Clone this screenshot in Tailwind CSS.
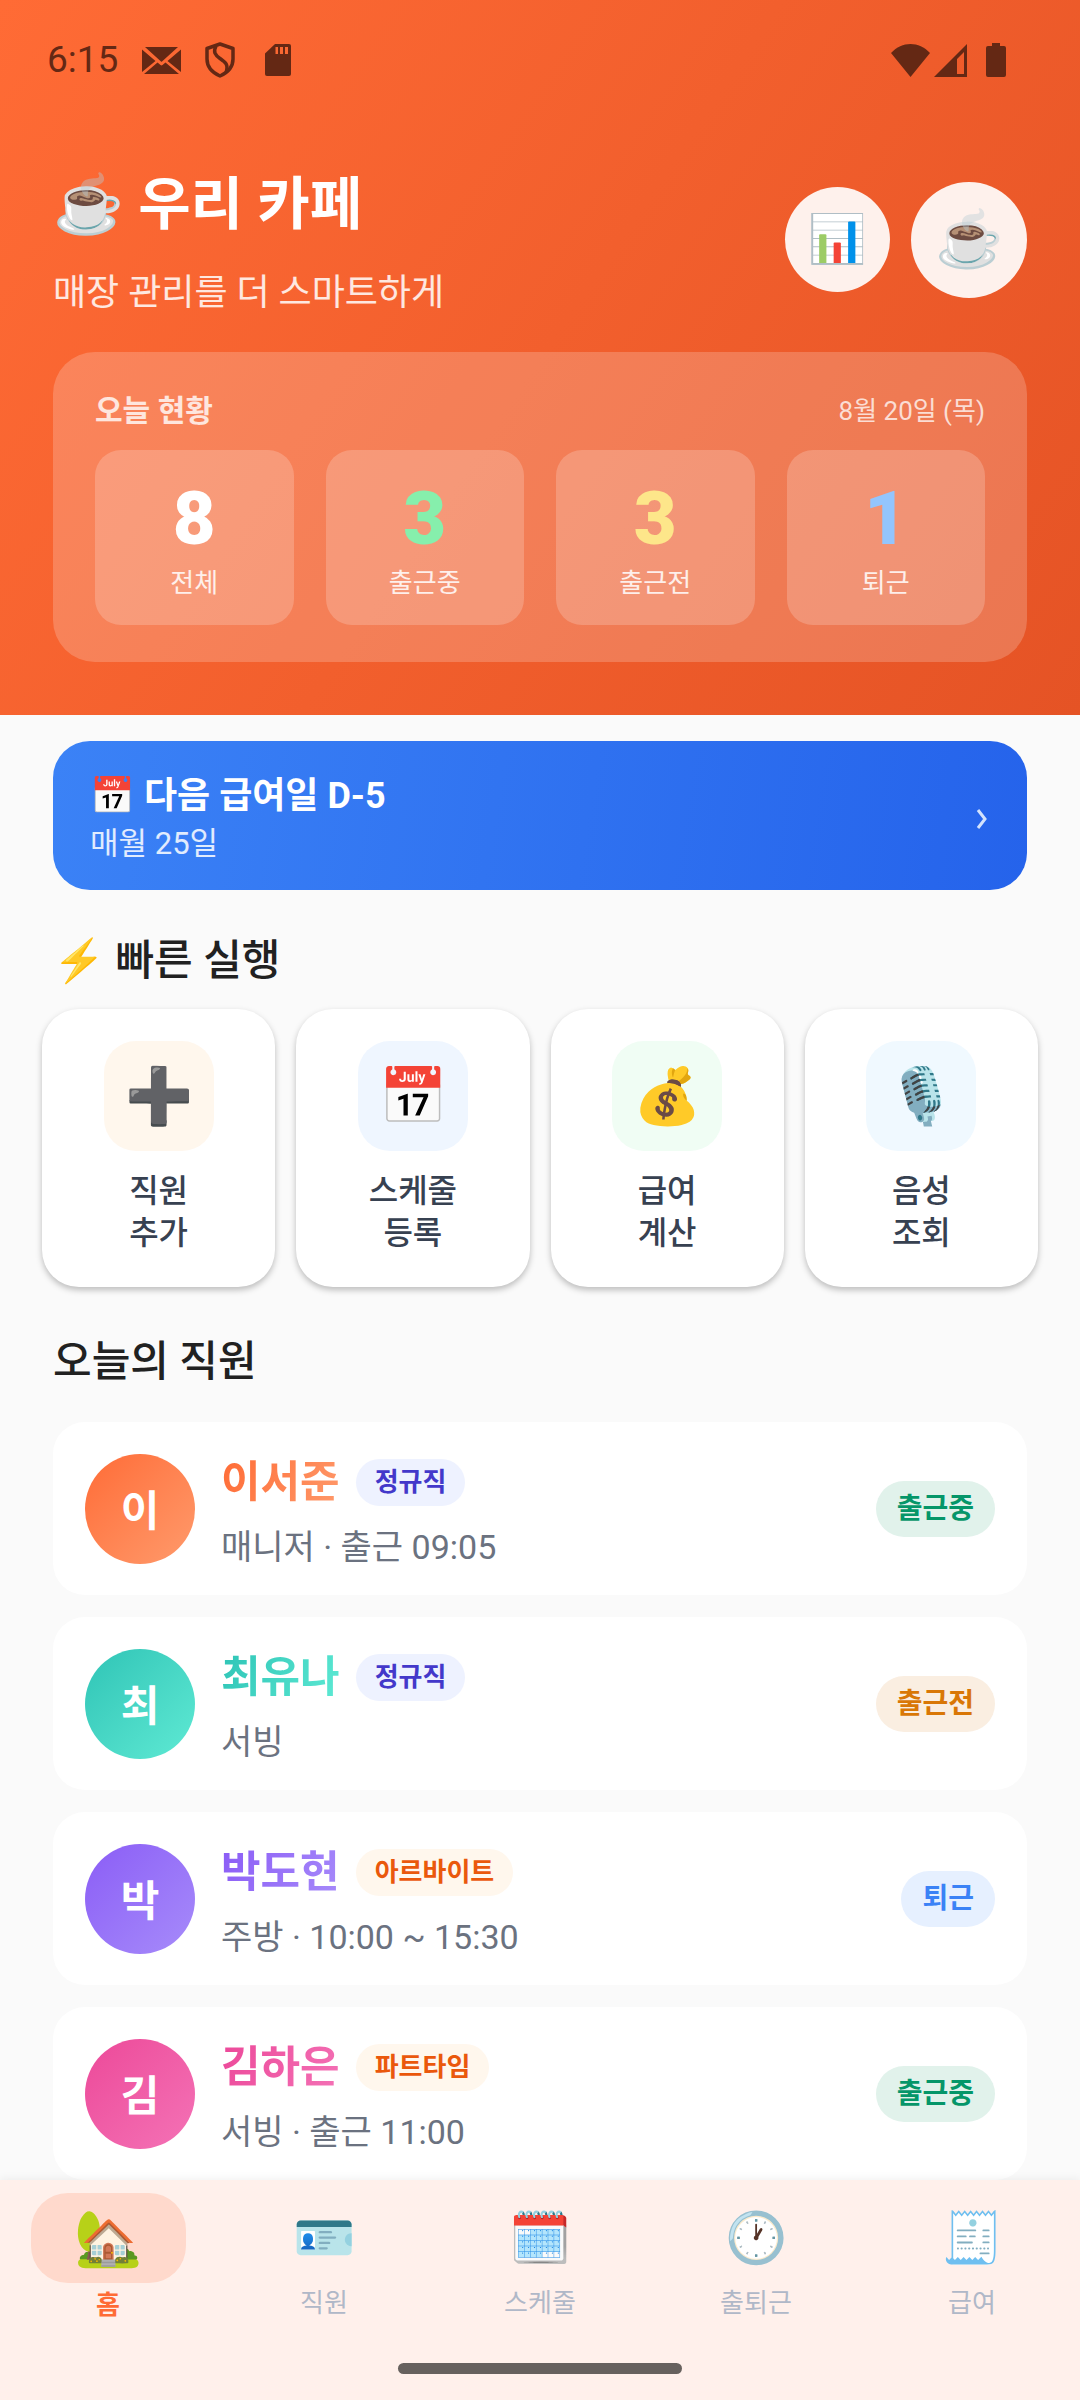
<!DOCTYPE html>
<html lang="ko">
<head>
  <meta charset="UTF-8">
  <meta name="viewport" content="width=device-width, initial-scale=1">
  <title>우리 카페</title>
  <script src="https://cdn.jsdelivr.net/npm/@tailwindcss/browser@4"></script>
</head>
<body class="min-h-screen flex flex-col bg-[#fafafa] text-[#212121] font-['Roboto','Noto_Sans_CJK_KR',sans-serif]">

  <!-- ───── Header ───── -->
  <header class="bg-linear-[124deg] from-[#ff6b35] to-[#e55325] pb-[53px]">

    <!-- status bar -->
    <div class="h-[120px] pl-[47px] pr-[74px] flex items-center justify-between text-[#642814]">
      <div class="flex items-center">
        <span class="text-[37px] leading-[42px]">6:15</span>
        <svg class="w-[39px] h-[27px] ml-6" viewBox="0 0 39 27" fill="currentColor">
          <path d="M3 0h33l-16 14.500q-.5.500-1 0zM0 2.500l13.500 11.500L0 25zM39 2.500V25L25.500 14zM15.500 15.500l3 2.500q1 .8 2 0l3-2.500L37 27H2z"/>
        </svg>
        <svg class="w-[30px] h-[36px] ml-6" viewBox="0 0 30 36" fill="none" stroke="currentColor" stroke-width="3.500" stroke-linejoin="round">
          <path d="M15 2 28 6.500V17c0 8-5 13.500-13 17C7 30.500 2 25 2 17V6.500z"/>
          <path d="M11 4c-3 6-1 9 4 12.500s9 6 6 14"/>
        </svg>
        <svg class="w-[26px] h-[32px] ml-[30px]" viewBox="0 0 26 32">
          <path d="M10 0h14a2 2 0 0 1 2 2v28a2 2 0 0 1-2 2H2a2 2 0 0 1-2-2V9.500z" fill="currentColor"/>
          <path d="M10.500 3h2.500v7h-2.500zM15 3h3v7h-3zM20 3h3v7h-3z" fill="#fa6832"/>
        </svg>
      </div>
      <div class="flex items-center">
        <svg class="w-[39px] h-[33px]" viewBox="0 0 39 33" fill="currentColor">
          <path d="M0 9C11-3 28-3 39 9L19.500 33z"/>
        </svg>
        <svg class="w-[33px] h-[33px] ml-1" viewBox="0 0 33 33" fill="currentColor">
          <path fill-rule="evenodd" d="M33 0v33H0zM30 8l-7 7v15h7z"/>
        </svg>
        <svg class="w-[20px] h-[34px] ml-[19px]" viewBox="0 0 20 34" fill="currentColor">
          <path d="M6 0h8v3h4a2 2 0 0 1 2 2v27a2 2 0 0 1-2 2H2a2 2 0 0 1-2-2V5a2 2 0 0 1 2-2h4z"/>
        </svg>
      </div>
    </div>

    <div class="px-[53px] pt-[41px]">
      <div class="flex items-center justify-between text-white">
        <div>
          <h1 class="text-[57px] leading-[88px] font-bold">☕ 우리 카페</h1>
          <p class="mt-[19px] text-[36px] leading-[50px] text-white/85">매장 관리를 더 스마트하게</p>
        </div>
        <div class="flex items-center gap-[21px]">
          <button type="button" aria-label="통계" class="size-[105px] rounded-full bg-[#fef1ec] flex items-center justify-center text-[47px]">📊</button>
          <button type="button" aria-label="매장" class="size-[116px] rounded-full bg-[#fef1ec] flex items-center justify-center text-[55px]">☕</button>
        </div>
      </div>

      <!-- today's numbers -->
      <section class="mt-[34px] rounded-[42px] bg-white/20 px-[42px] pt-[38px] pb-[37px]">
        <div class="flex items-center justify-between">
          <h2 class="text-[30px] leading-[42px] font-bold text-white/80">오늘 현황</h2>
          <span class="text-[26px] leading-[42px] text-white/75">8월 20일 (목)</span>
        </div>
        <div class="mt-[18px] grid grid-cols-4 gap-8 text-center">
          <div class="rounded-[26px] bg-white/20 pt-8 pb-[22px]">
            <div class="text-[74px] leading-[74px] font-black text-white">8</div>
            <div class="mt-2 text-[26px] leading-[39px] text-white/85">전체</div>
          </div>
          <div class="rounded-[26px] bg-white/20 pt-8 pb-[22px]">
            <div class="text-[74px] leading-[74px] font-black text-[#86efac]">3</div>
            <div class="mt-2 text-[26px] leading-[39px] text-white/85">출근중</div>
          </div>
          <div class="rounded-[26px] bg-white/20 pt-8 pb-[22px]">
            <div class="text-[74px] leading-[74px] font-black text-[#fde68a]">3</div>
            <div class="mt-2 text-[26px] leading-[39px] text-white/85">출근전</div>
          </div>
          <div class="rounded-[26px] bg-white/20 pt-8 pb-[22px]">
            <div class="text-[74px] leading-[74px] font-black text-[#93c5fd]">1</div>
            <div class="mt-2 text-[26px] leading-[39px] text-white/85">퇴근</div>
          </div>
        </div>
      </section>
    </div>
  </header>

  <main class="flex-1 px-[53px] pt-[26px]">

    <!-- ───── Next payday ───── -->
    <a href="#payday" class="flex items-center justify-between rounded-[37px] bg-linear-[99deg] from-[#3b82f6] to-[#2563eb] pl-[37px] pr-[39px] pt-[30px] pb-6 text-white">
      <div>
        <div class="text-[36px] leading-[50px] font-bold">📅 다음 급여일 D-5</div>
        <div class="text-[31px] leading-[45px] text-white/85">매월 25일</div>
      </div>
      <svg class="w-[12px] h-[22px]" viewBox="0 0 12 22" fill="none" stroke="#d3e2fc" stroke-width="3">
        <path d="M2 2l7 9-7 9"/>
      </svg>
    </a>

    <!-- ───── Quick actions ───── -->
    <h2 class="mt-[41px] text-[42px] leading-[60px] font-medium">⚡ 빠른 실행</h2>
    <div class="mt-[18px] -mx-[11px] grid grid-cols-4 gap-[21px] text-[32px] leading-[42px] font-medium text-[#374151]">
      <button type="button" class="flex flex-col items-center rounded-[37px] bg-white pt-8 pb-[33px] shadow-[0_3px_6px_rgba(0,0,0,0.25)]">
        <span class="size-[110px] rounded-[32px] bg-[#fff7ed] flex items-center justify-center text-[55px]">➕</span>
        <span class="mt-[19px]">직원<br>추가</span>
      </button>
      <button type="button" class="flex flex-col items-center rounded-[37px] bg-white pt-8 pb-[33px] shadow-[0_3px_6px_rgba(0,0,0,0.25)]">
        <span class="size-[110px] rounded-[32px] bg-[#eff6ff] flex items-center justify-center text-[55px]">📅</span>
        <span class="mt-[19px]">스케줄<br>등록</span>
      </button>
      <button type="button" class="flex flex-col items-center rounded-[37px] bg-white pt-8 pb-[33px] shadow-[0_3px_6px_rgba(0,0,0,0.25)]">
        <span class="size-[110px] rounded-[32px] bg-[#f0fdf4] flex items-center justify-center text-[55px]">💰</span>
        <span class="mt-[19px]">급여<br>계산</span>
      </button>
      <button type="button" class="flex flex-col items-center rounded-[37px] bg-white pt-8 pb-[33px] shadow-[0_3px_6px_rgba(0,0,0,0.25)]">
        <span class="size-[110px] rounded-[32px] bg-[#f0f9ff] flex items-center justify-center text-[55px]">🎙️</span>
        <span class="mt-[19px]">음성<br>조회</span>
      </button>
    </div>

    <!-- ───── Today's staff ───── -->
    <h2 class="mt-[45px] text-[42px] leading-[60px] font-medium">오늘의 직원</h2>
    <ul class="mt-[30px] space-y-[22px]">
      <li class="flex items-center rounded-[32px] bg-white px-8 pt-8 pb-[31px]">
        <span class="size-[110px] rounded-full bg-linear-135 from-[#ff6b35] to-[#ff9a6b] flex items-center justify-center pt-1 text-[42px] font-bold text-white">이</span>
        <div class="ml-[26px] flex-1">
          <div class="flex items-center gap-4">
            <span class="text-[43px] leading-[56px] font-bold bg-linear-[117deg] from-[#ff6b35] to-[#ff9a6b] bg-clip-text text-transparent">이서준</span>
            <span class="rounded-full bg-[#eef2ff] px-[19px] text-[26px] leading-[47px] font-bold text-[#4338ca]">정규직</span>
          </div>
          <p class="mt-5 text-[34px] leading-[34px] text-[#6b7280]">매니저 · 출근 09:05</p>
        </div>
        <span class="rounded-full bg-[#e1f2eb] px-[21px] text-[28px] leading-[56px] font-bold text-[#059669]">출근중</span>
      </li>
      <li class="flex items-center rounded-[32px] bg-white px-8 pt-8 pb-[31px]">
        <span class="size-[110px] rounded-full bg-linear-135 from-[#2ec4b6] to-[#5eead4] flex items-center justify-center pt-1 text-[42px] font-bold text-white">최</span>
        <div class="ml-[26px] flex-1">
          <div class="flex items-center gap-4">
            <span class="text-[43px] leading-[56px] font-bold bg-linear-[117deg] from-[#2ec4b6] to-[#5eead4] bg-clip-text text-transparent">최유나</span>
            <span class="rounded-full bg-[#eef2ff] px-[19px] text-[26px] leading-[47px] font-bold text-[#4338ca]">정규직</span>
          </div>
          <p class="mt-5 text-[34px] leading-[34px] text-[#6b7280]">서빙</p>
        </div>
        <span class="rounded-full bg-[#faeee1] px-[21px] text-[28px] leading-[56px] font-bold text-[#d97706]">출근전</span>
      </li>
      <li class="flex items-center rounded-[32px] bg-white px-8 pt-8 pb-[31px]">
        <span class="size-[110px] rounded-full bg-linear-135 from-[#8b5cf6] to-[#a78bfa] flex items-center justify-center pt-1 text-[42px] font-bold text-white">박</span>
        <div class="ml-[26px] flex-1">
          <div class="flex items-center gap-4">
            <span class="text-[43px] leading-[56px] font-bold bg-linear-[117deg] from-[#8b5cf6] to-[#a78bfa] bg-clip-text text-transparent">박도현</span>
            <span class="rounded-full bg-[#fff7ed] px-[19px] text-[26px] leading-[47px] font-bold text-[#ea580c]">아르바이트</span>
          </div>
          <p class="mt-5 text-[34px] leading-[34px] text-[#6b7280]">주방 · 10:00 ~ 15:30</p>
        </div>
        <span class="rounded-full bg-[#e6f0ff] px-[21px] text-[28px] leading-[56px] font-bold text-[#3b82f6]">퇴근</span>
      </li>
      <li class="flex items-center rounded-[32px] bg-white px-8 pt-8 pb-[31px]">
        <span class="size-[110px] rounded-full bg-linear-135 from-[#ec4899] to-[#f472b6] flex items-center justify-center pt-1 text-[42px] font-bold text-white">김</span>
        <div class="ml-[26px] flex-1">
          <div class="flex items-center gap-4">
            <span class="text-[43px] leading-[56px] font-bold bg-linear-[117deg] from-[#ec4899] to-[#f472b6] bg-clip-text text-transparent">김하은</span>
            <span class="rounded-full bg-[#fff7ed] px-[19px] text-[26px] leading-[47px] font-bold text-[#ea580c]">파트타임</span>
          </div>
          <p class="mt-5 text-[34px] leading-[34px] text-[#6b7280]">서빙 · 출근 11:00</p>
        </div>
        <span class="rounded-full bg-[#e1f2eb] px-[21px] text-[28px] leading-[56px] font-bold text-[#059669]">출근중</span>
      </li>
    </ul>
  </main>

  <!-- ───── Bottom navigation ───── -->
  <nav class="sticky bottom-0 bg-[#fff0eb] pt-[13px] pb-[26px] shadow-[0_-2px_8px_rgba(0,0,0,0.05)]">
    <div class="grid grid-cols-5 text-center text-[26px] leading-[40px] text-[#b0b8c8]">
      <a href="#home" class="flex flex-col items-center gap-0.5 font-bold text-[#ff6b35]">
        <span class="w-[155px] h-[90px] rounded-[37px] bg-[#ffd9cc] flex items-center justify-center text-[55px]">🏡</span>
        홈
      </a>
      <a href="#staff" class="flex flex-col items-center">
        <span class="h-[90px] flex items-center text-[50px]">🪪</span>
        직원
      </a>
      <a href="#schedule" class="flex flex-col items-center">
        <span class="h-[90px] flex items-center text-[50px]">🗓️</span>
        스케줄
      </a>
      <a href="#attendance" class="flex flex-col items-center">
        <span class="h-[90px] flex items-center text-[50px]">🕐</span>
        출퇴근
      </a>
      <a href="#pay" class="flex flex-col items-center">
        <span class="h-[90px] flex items-center text-[50px]">🧾</span>
        급여
      </a>
    </div>
    <div class="mt-[38px] mx-auto w-[284px] h-[11px] rounded-full bg-[#67615e]"></div>
  </nav>

</body>
</html>
